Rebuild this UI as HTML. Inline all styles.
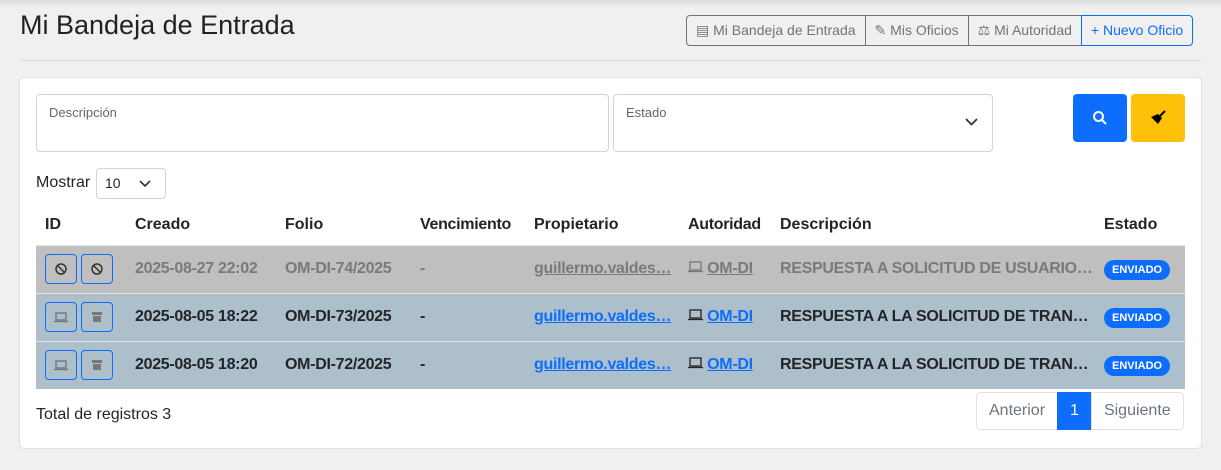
<!DOCTYPE html>
<html><head><meta charset="utf-8"><style>
*{box-sizing:border-box;margin:0;padding:0}
body{width:1221px;height:470px;background:#f0f0f0;font-family:"Liberation Sans",sans-serif;color:#212529;position:relative;overflow:hidden}
.topsh{position:absolute;left:0;top:0;width:1221px;height:8px;background:linear-gradient(#dcdcdc,#f0f0f0)}
h1{position:absolute;left:20px;top:10px;font-size:27px;font-weight:400;color:#222}
.hr{position:absolute;left:20px;right:19px;top:60px;border-top:1px solid #dcdcdc}
.bg{position:absolute;top:15px;left:687px;height:31px;display:flex;font-size:14px}
.bg div{border:1px solid #6c757d;color:#6c757d;padding:0 9px;line-height:29px;margin-left:-1px}
.bg div:first-child{border-radius:4px 0 0 4px}
.bg div:last-child{border-color:#0d6efd;color:#0d6efd;border-radius:0 4px 4px 0}
.card{position:absolute;left:19px;top:77px;width:1183px;height:372px;background:#fff;border:1px solid #dee2e6;border-radius:5px}
.in{position:absolute;top:94px;height:58px;border:1px solid #ced4da;border-radius:4px;background:#fff;font-size:13px;color:#666;padding:10px 12px}
.btn{position:absolute;top:94px;width:54px;height:48px;border-radius:4px;display:flex;align-items:center;justify-content:center}
table{position:absolute;left:36px;top:205px;width:1149px;border-collapse:collapse;font-size:16px;table-layout:fixed}
th{text-align:left;font-weight:700;height:40px;padding-left:9px}
td{height:48px;padding-left:9px;font-weight:700;white-space:nowrap;border-top:1px solid #e4e4e4;overflow:hidden;letter-spacing:-0.3px}
tr.g td{background:#bfbfbf;color:#7a7a7a}
tr.b td{background:#adbfcb}
.ib{display:inline-block;width:32px;height:30px;border:1px solid #0d6efd;border-radius:4px;vertical-align:middle;margin-right:4px;position:relative}
.ib svg{position:absolute;left:8px;top:7px}
a{text-decoration:underline;color:#0d6efd}
tr.g a{color:#7a7a7a}
.badge{background:#0d6efd;color:#fff;font-size:11px;border-radius:10px;padding:4px 8px;font-weight:700;letter-spacing:0}
.pg{position:absolute;top:392px;left:977px;height:38px;display:flex;font-size:16px}
.pg div{border:1px solid #dee2e6;line-height:36px;padding:0 12px;color:#6c757d;margin-left:-1px}
</style></head><body>
<div class="topsh"></div>
<h1>Mi Bandeja de Entrada</h1>
<div class="bg"><div>▤ Mi Bandeja de Entrada</div><div>✎ Mis Oficios</div><div>⚖ Mi Autoridad</div><div>+ Nuevo Oficio</div></div>
<div class="hr"></div>
<div class="card"></div>
<div class="in" style="left:36px;width:573px">Descripción</div>
<div class="in" style="left:613px;width:380px">Estado<svg style="position:absolute;right:14px;top:23px" width="13" height="9" viewBox="0 0 13 9"><path d="M1 1l5.5 5.5L12 1" stroke="#333" stroke-width="1.8" fill="none"/></svg></div>
<div class="btn" style="left:1073px;background:#0d6efd"><svg width="16" height="16" viewBox="0 0 16 16"><circle cx="6.5" cy="6.5" r="4.5" stroke="#fff" stroke-width="2" fill="none"/><path d="M10 10l4 4" stroke="#fff" stroke-width="2"/></svg></div>
<div class="btn" style="left:1131px;background:#ffc107"><svg width="18" height="18" viewBox="0 0 18 18"><path d="M11 7l5-5" stroke="#000" stroke-width="2"/><path d="M9 5l4 4-4 6-7-7z" fill="#000"/></svg></div>
<div style="position:absolute;left:36px;top:174px;font-size:16px">Mostrar</div>
<div style="position:absolute;left:96px;top:168px;width:70px;height:31px;border:1px solid #ced4da;border-radius:4px;font-size:14px;padding:6px 8px">10<svg style="position:absolute;right:14px;top:11px" width="12" height="8" viewBox="0 0 12 8"><path d="M1 1l5 5 5-5" stroke="#333" stroke-width="1.6" fill="none"/></svg></div>
<table>
<colgroup><col style="width:90px"><col style="width:150px"><col style="width:135px"><col style="width:114px"><col style="width:154px"><col style="width:92px"><col style="width:324px"><col></colgroup>
<tr><th>ID</th><th>Creado</th><th>Folio</th><th style="letter-spacing:-0.3px">Vencimiento</th><th>Propietario</th><th style="letter-spacing:-0.3px">Autoridad</th><th>Descripción</th><th>Estado</th></tr>
<tr class="g"><td><span class="ib"><svg width="14" height="14"><circle cx="7" cy="7" r="5" stroke="#333" stroke-width="1.5" fill="none"/><path d="M3.5 3.5l7 7" stroke="#333" stroke-width="1.5"/></svg></span><span class="ib"><svg width="14" height="14"><circle cx="7" cy="7" r="5" stroke="#333" stroke-width="1.5" fill="none"/><path d="M3.5 3.5l7 7" stroke="#333" stroke-width="1.5"/></svg></span></td><td>2025-08-27 22:02</td><td>OM-DI-74/2025</td><td>-</td><td><a>guillermo.valdes…</a></td><td><svg width="15" height="12"><rect x="2" y="1" width="11" height="8" fill="none" stroke="#777" stroke-width="1.3"/><path d="M0 10.5h15" stroke="#777" stroke-width="1.3"/></svg> <a>OM-DI</a></td><td>RESPUESTA A SOLICITUD DE USUARIO…</td><td><span class="badge">ENVIADO</span></td></tr>
<tr class="b"><td><span class="ib"><svg width="14" height="14"><rect x="2" y="3" width="10" height="7" fill="none" stroke="#777" stroke-width="1.4"/><path d="M0 11.5h14" stroke="#777" stroke-width="1.4"/></svg></span><span class="ib"><svg width="14" height="14"><rect x="2" y="2" width="10" height="3" fill="#777"/><rect x="3" y="6" width="8" height="6" fill="#777"/></svg></span></td><td>2025-08-05 18:22</td><td>OM-DI-73/2025</td><td>-</td><td><a>guillermo.valdes…</a></td><td><svg width="15" height="12"><rect x="2" y="1" width="11" height="8" fill="none" stroke="#222" stroke-width="1.3"/><path d="M0 10.5h15" stroke="#222" stroke-width="1.3"/></svg> <a>OM-DI</a></td><td>RESPUESTA A LA SOLICITUD DE TRAN…</td><td><span class="badge">ENVIADO</span></td></tr>
<tr class="b"><td><span class="ib"><svg width="14" height="14"><rect x="2" y="3" width="10" height="7" fill="none" stroke="#777" stroke-width="1.4"/><path d="M0 11.5h14" stroke="#777" stroke-width="1.4"/></svg></span><span class="ib"><svg width="14" height="14"><rect x="2" y="2" width="10" height="3" fill="#777"/><rect x="3" y="6" width="8" height="6" fill="#777"/></svg></span></td><td>2025-08-05 18:20</td><td>OM-DI-72/2025</td><td>-</td><td><a>guillermo.valdes…</a></td><td><svg width="15" height="12"><rect x="2" y="1" width="11" height="8" fill="none" stroke="#222" stroke-width="1.3"/><path d="M0 10.5h15" stroke="#222" stroke-width="1.3"/></svg> <a>OM-DI</a></td><td>RESPUESTA A LA SOLICITUD DE TRAN…</td><td><span class="badge">ENVIADO</span></td></tr>
</table>
<div style="position:absolute;left:36px;top:406px;font-size:16px">Total de registros 3</div>
<div class="pg"><div style="border-radius:4px 0 0 4px">Anterior</div><div style="background:#0d6efd;color:#fff;border-color:#0d6efd">1</div><div style="border-radius:0 4px 4px 0">Siguiente</div></div>
</body></html>
